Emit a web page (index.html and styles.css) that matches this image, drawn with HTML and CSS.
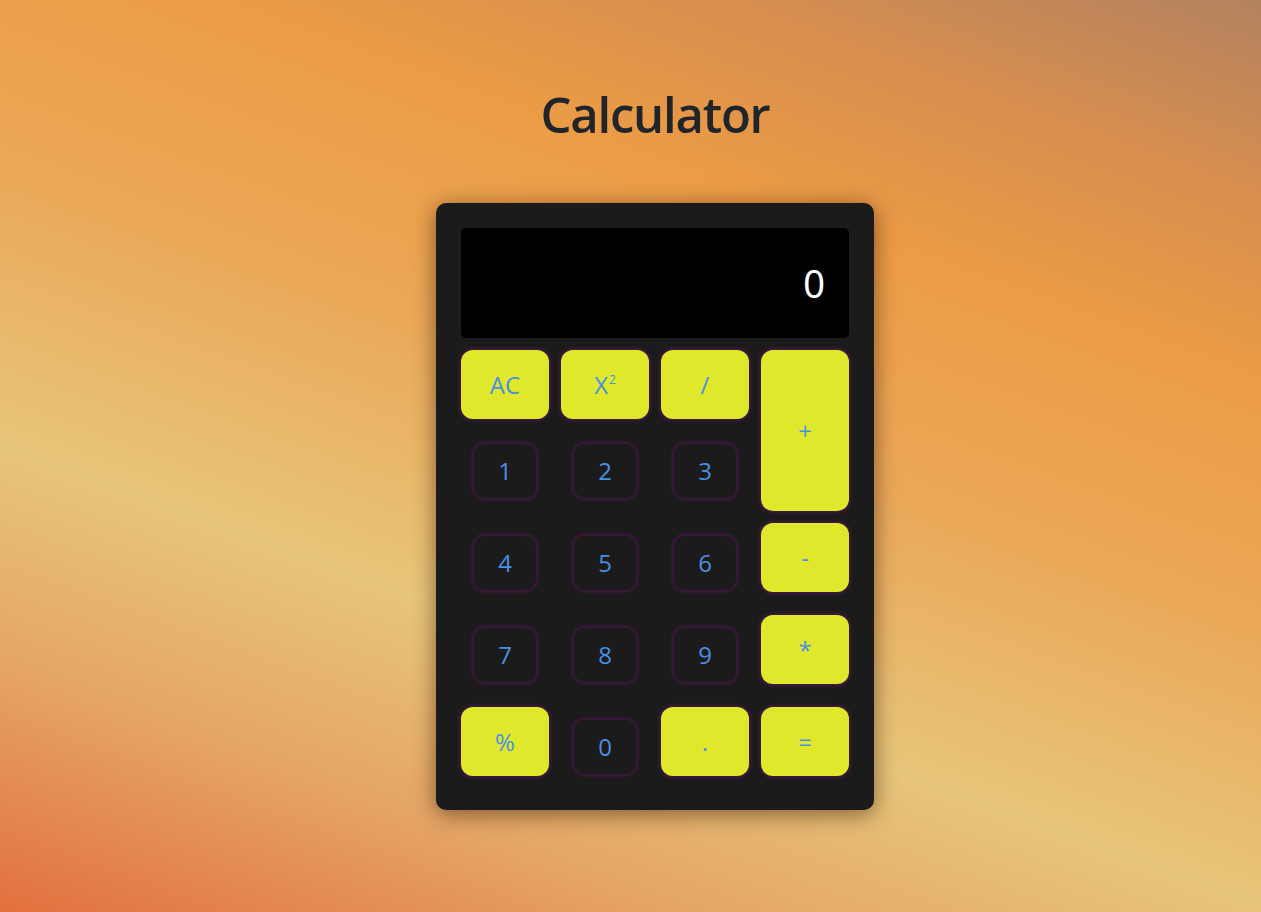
FILE: index.html
```html
<!DOCTYPE html>
<html lang="en">
<head>
<meta charset="utf-8">
<title>Calculator</title>
<link rel="stylesheet" href="styles.css">
</head>
<body>
<main class="page">
  <h1 class="title">Calculator</h1>
  <div class="calculator">
    <div class="display">0</div>
    <button class="key op">AC</button>
    <button class="key op">X<sup>2</sup></button>
    <button class="key op">/</button>
    <button class="key op tall">+</button>
    <button class="key num">1</button>
    <button class="key num">2</button>
    <button class="key num">3</button>
    <button class="key num">4</button>
    <button class="key num">5</button>
    <button class="key num">6</button>
    <button class="key op">-</button>
    <button class="key num">7</button>
    <button class="key num">8</button>
    <button class="key num">9</button>
    <button class="key op">*</button>
    <button class="key op">%</button>
    <button class="key num">0</button>
    <button class="key op">.</button>
    <button class="key op">=</button>
  </div>
</main>
</body>
</html>
```

FILE: styles.css
```css
* { box-sizing: border-box; }

html, body {
  margin: 0;
  height: 100%;
}

body {
  font-family: "Open Sans", "Noto Sans", sans-serif;
  background: linear-gradient(20deg, #e2703f 0%, #e5a465 18%, #e7c57a 34%, #eba757 55%, #ec9c45 72%, #d78e4f 86%, #b3825f 100%);
  color: #212529;
}

.page {
  min-height: 100%;
  display: flex;
  flex-direction: column;
  align-items: center;
  padding-top: 85px;
  padding-left: 49px;
}

.title {
  margin: 0 0 59px;
  font-size: 49px;
  font-weight: 600;
  line-height: 1.2;
  letter-spacing: -1.2px;
  color: #212529;
}

.calculator {
  width: 438px;
  padding: 25px 25px 23px;
  background: #1b1b1b;
  border-radius: 10px;
  box-shadow: 0 4px 22px rgba(40, 20, 0, 0.55);
  display: grid;
  grid-template-columns: repeat(4, 88px);
  grid-template-rows: 110px 69px 80px 80px 80px 80px;
  column-gap: 12px;
  row-gap: 12px;
}

.display {
  grid-column: 1 / -1;
  background: #000;
  border-radius: 5px;
  color: #fff;
  font-size: 38px;
  display: flex;
  align-items: center;
  justify-content: flex-end;
  padding-right: 24px;
  text-shadow: 0 0 1px rgba(120, 200, 255, 0.6);
}

.key {
  font-family: inherit;
  font-size: 24px;
  color: #4a8fe0;
  border: none;
  padding: 0;
  margin: 0;
  cursor: pointer;
  display: flex;
  align-items: center;
  justify-content: center;
}

.key sup {
  font-size: 12px;
  line-height: 0;
  position: relative;
  top: -4px;
  margin-left: 1px;
}

.op {
  background: #e0e82b;
  height: 69px;
  align-self: start;
  border-radius: 12px;
  box-shadow: 0 0 5px rgba(140, 30, 140, 0.75);
}

.op.tall {
  grid-row: span 2;
  height: auto;
  align-self: stretch;
}

.num {
  background: #1b1b1b;
  width: 64px;
  height: 56px;
  justify-self: center;
  align-self: center;
  border-radius: 12px;
  border: 1px solid #38183a;
  box-shadow: 0 0 4px rgba(120, 25, 120, 0.65);
}
```
